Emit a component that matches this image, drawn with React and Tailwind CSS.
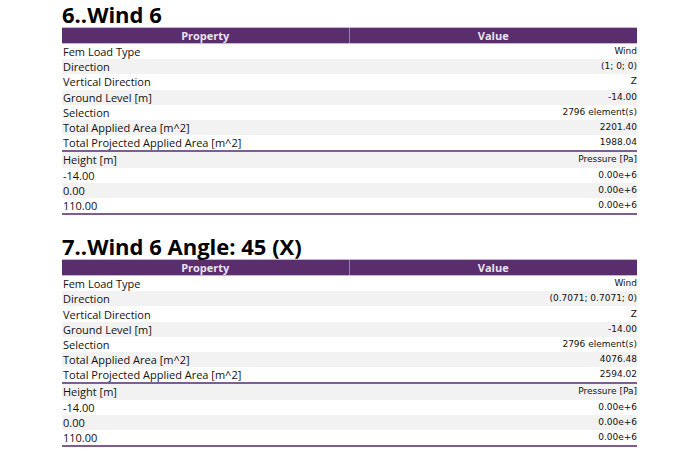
const sections = [
  {
    title: '6..Wind 6',
    props: [
      ['Fem Load Type', 'Wind'],
      ['Direction', '(1; 0; 0)'],
      ['Vertical Direction', 'Z'],
      ['Ground Level [m]', '-14.00'],
      ['Selection', '2796 element(s)'],
      ['Total Applied Area [m^2]', '2201.40'],
      ['Total Projected Applied Area [m^2]', '1988.04'],
    ],
  },
  {
    title: '7..Wind 6 Angle: 45 (X)',
    props: [
      ['Fem Load Type', 'Wind'],
      ['Direction', '(0.7071; 0.7071; 0)'],
      ['Vertical Direction', 'Z'],
      ['Ground Level [m]', '-14.00'],
      ['Selection', '2796 element(s)'],
      ['Total Applied Area [m^2]', '4076.48'],
      ['Total Projected Applied Area [m^2]', '2594.02'],
    ],
  },
];

const pressures = [
  ['-14.00', '0.00e+6'],
  ['0.00', '0.00e+6'],
  ['110.00', '0.00e+6'],
];

function Row({ label, value, odd }) {
  return (
    <div className={`flex h-[15.2px] items-center ${odd ? 'bg-[#f2f2f2]' : 'bg-white'}`}>
      <div className="w-1/2 pl-[1px] text-[11px] leading-[15px] text-[#111]" style={{ fontFamily: 'Open Sans' }}>{label}</div>
      <div className="w-1/2 text-right text-[9px] leading-[15px] text-[#111]" style={{ fontFamily: 'DejaVu Sans' }}>{value}</div>
    </div>
  );
}

function Section({ title, props }) {
  return (
    <section className="mb-[18px]">
      <h2 className="text-[22px] font-bold leading-[26px] text-black" style={{ fontFamily: 'Open Sans' }}>{title}</h2>
      <div className="flex h-[17px] border-y border-[#c9b6d6] bg-[#5a2d6d] text-[11px] font-bold leading-none text-[#ebe3f0]" style={{ fontFamily: 'Open Sans' }}>
        <div className="flex w-1/2 items-center justify-center border-r border-[#9c7fb0]">Property</div>
        <div className="flex w-1/2 items-center justify-center">Value</div>
      </div>
      <div className="border-b-2 border-[#7e5d90]">
        {props.map(([l, v], i) => (
          <Row key={l} label={l} value={v} odd={i % 2 === 1} />
        ))}
      </div>
      <div className="border-b-2 border-[#7e5d90]">
        <Row label="Height [m]" value="Pressure [Pa]" odd />
        {pressures.map(([l, v], i) => (
          <Row key={l} label={l} value={v} odd={i % 2 === 1} />
        ))}
      </div>
    </section>
  );
}

export default function App() {
  return (
    <main className="min-h-[473px] bg-white pt-[1px]">
      <div className="ml-[62px] w-[575px]">
        {sections.map((s) => (
          <Section key={s.title} {...s} />
        ))}
      </div>
    </main>
  );
}
